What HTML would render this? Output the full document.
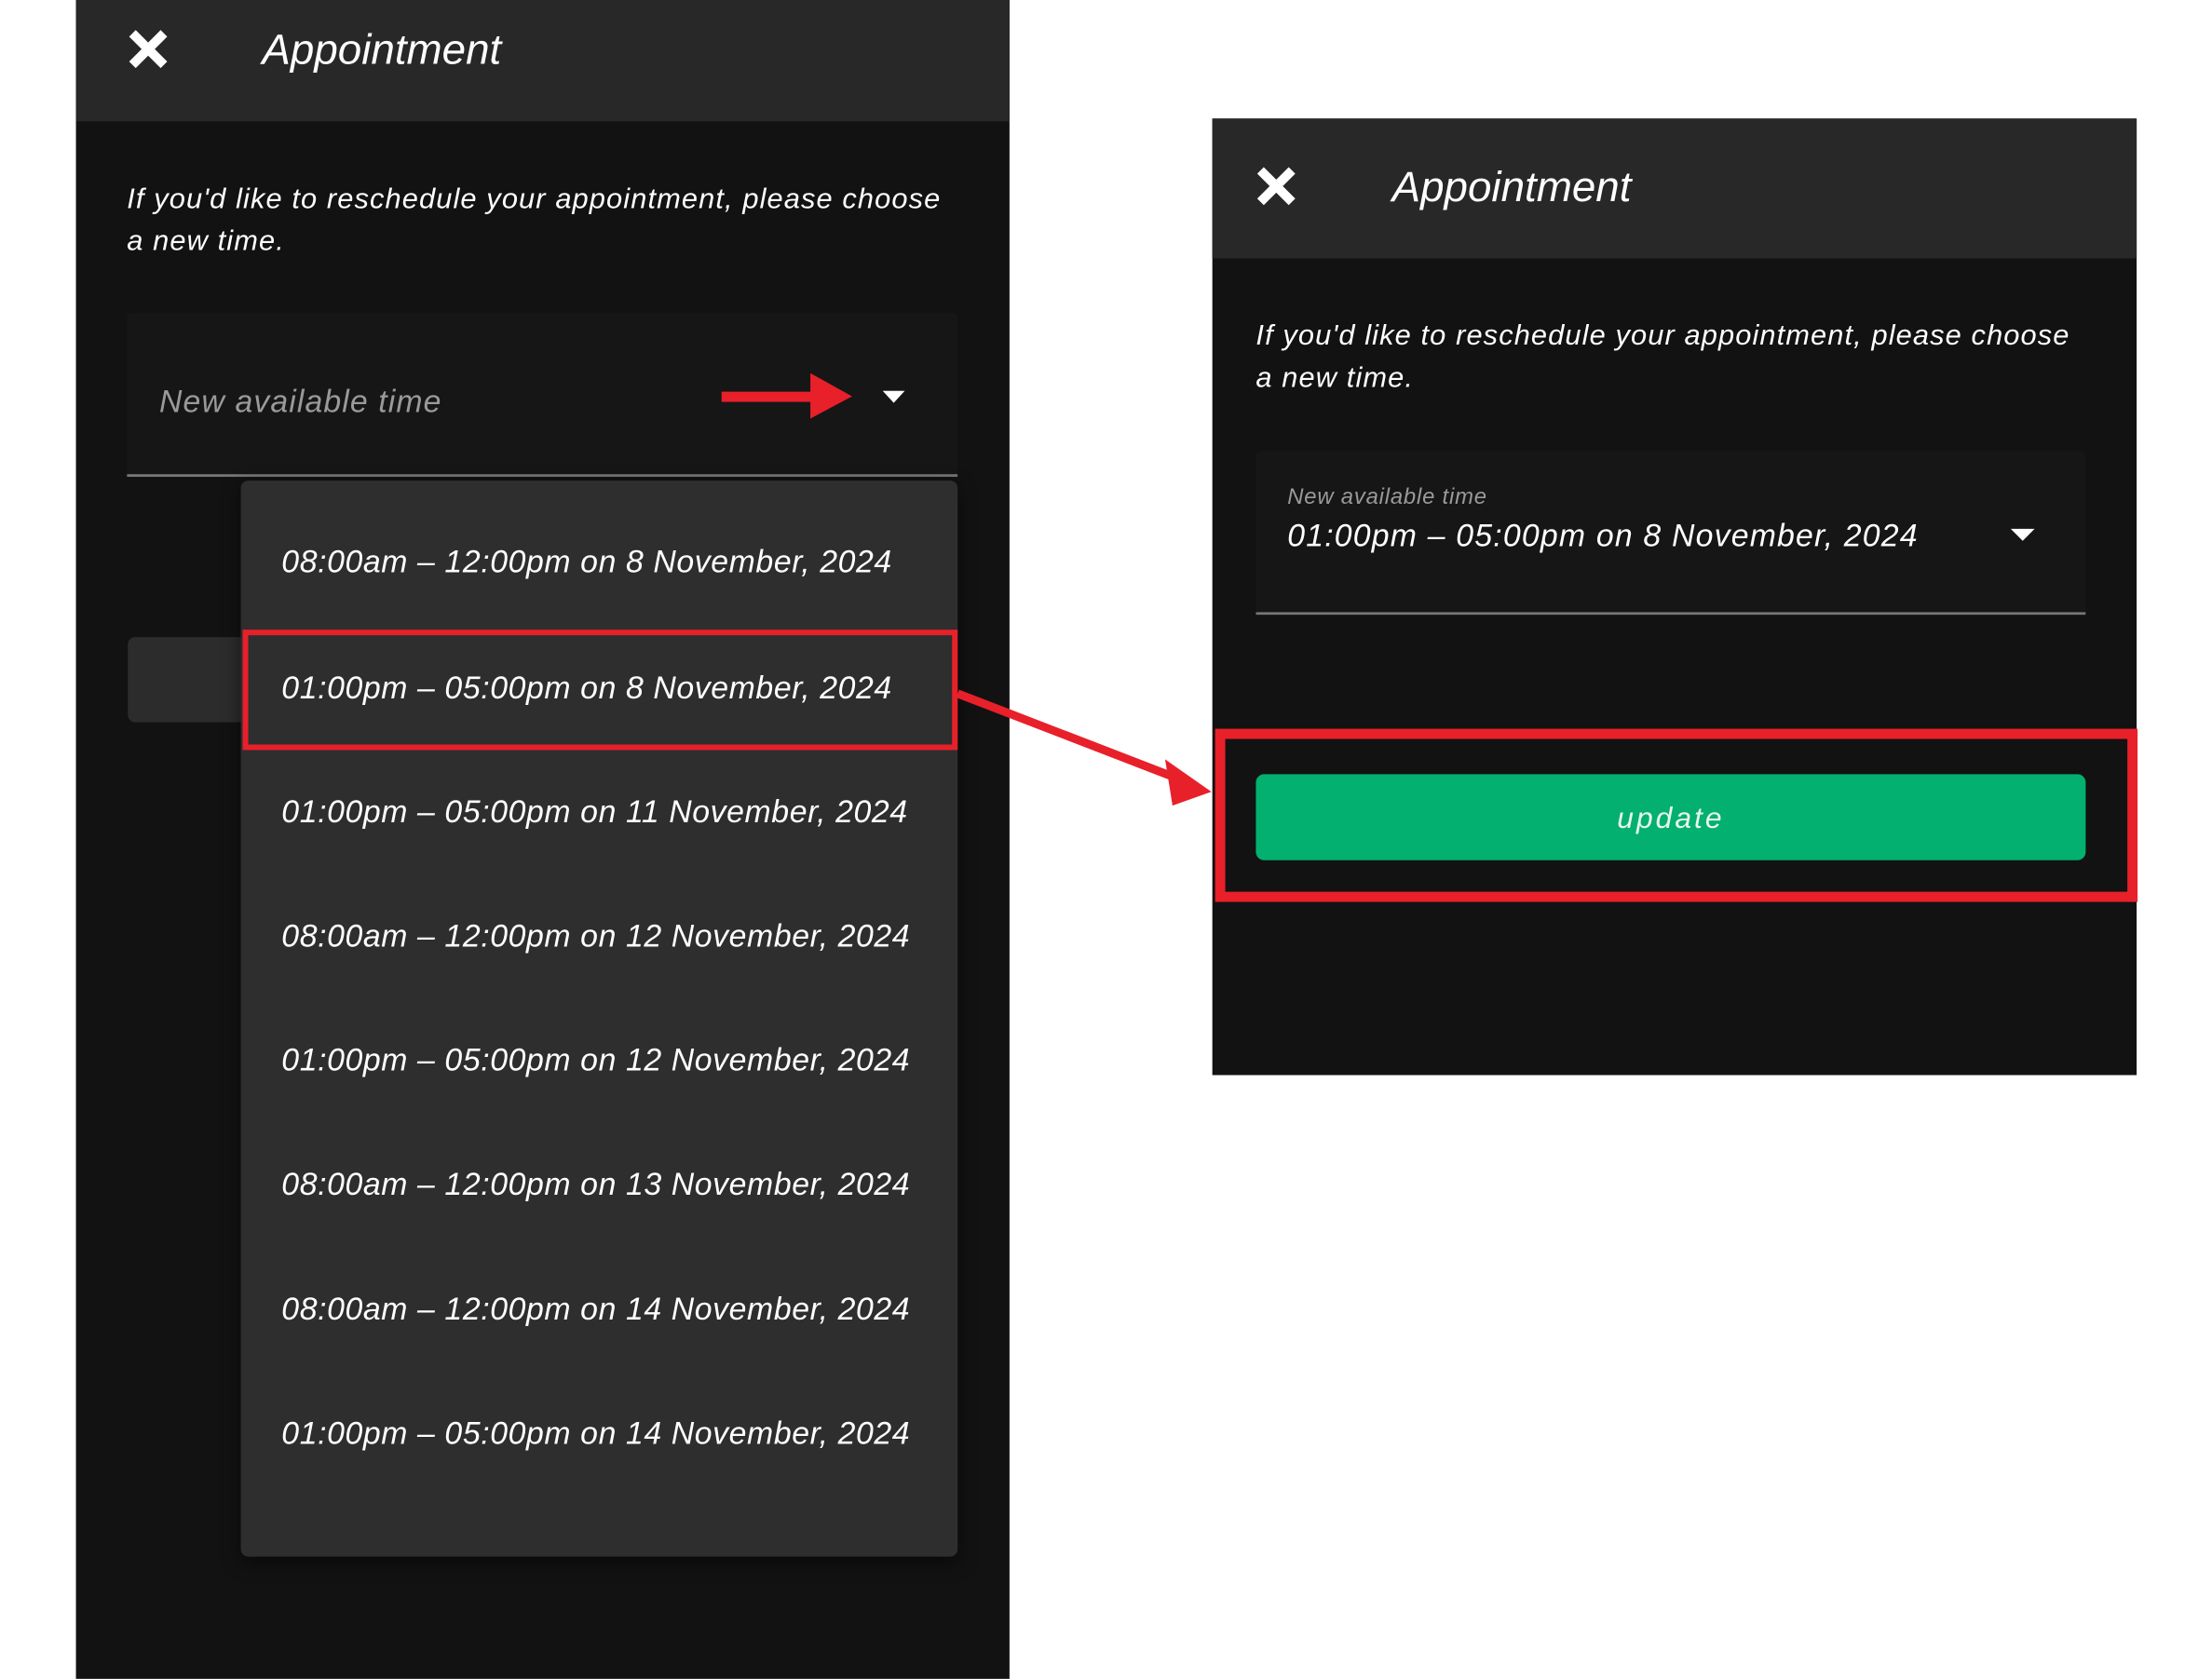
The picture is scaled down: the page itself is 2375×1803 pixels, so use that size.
<!DOCTYPE html>
<html><head><meta charset="utf-8"><style>
*{margin:0;padding:0;box-sizing:border-box}
body{width:2375px;height:1803px;background:#fff;position:relative;overflow:hidden;font-family:"Liberation Sans",sans-serif;font-style:italic;color:#fff}
#w{position:absolute;left:0;top:0;width:2400px;height:1813px;transform:scale(0.9944);transform-origin:0 0}
.a{position:absolute}
.t{white-space:nowrap;line-height:1}
.p{letter-spacing:1.1px}
.m{letter-spacing:0.6px}
</style></head><body><div id="w">
<div class="a" style="left:82px;top:0;width:1008px;height:1813px;background:#121212"></div>
<div class="a" style="left:82px;top:0;width:1008px;height:131px;background:#282828"></div>
<svg class="a" style="left:137px;top:30px" width="46" height="46" viewBox="0 0 46 46"><path d="M6 6L40 40M40 6L6 40" stroke="#fff" stroke-width="10"/></svg>
<div class="a t" style="left:283px;top:30px;font-size:46px">Appointment</div>
<div class="a t p" style="left:137px;top:199px;font-size:31px">If you'd like to reschedule your appointment, please choose</div>
<div class="a t p" style="left:137px;top:244px;font-size:31px">a new time.</div>
<div class="a" style="left:137px;top:338px;width:897px;height:177px;background:#161616;border-bottom:3px solid #777;border-radius:6px 6px 0 0"></div>
<div class="a t p" style="left:172px;top:417px;font-size:34px;color:#9a9a9a">New available time</div>
<svg class="a" style="left:779px;top:400px" width="145" height="55"><rect x="0" y="23" width="100" height="11" fill="#e8202a"/><path d="M96 3L141 28L96 52Z" fill="#e8202a"/></svg>
<svg class="a" style="left:953px;top:422px" width="24" height="14"><path d="M0 0H24L12 13Z" fill="#fff"/></svg>
<div class="a" style="left:138px;top:688px;width:200px;height:92px;background:#2c2c2c;border-radius:8px"></div>
<div class="a" style="left:260px;top:519px;width:774px;height:1162px;background:#2e2e2e;border-radius:8px;box-shadow:0 6px 20px rgba(0,0,0,.5)"></div>
<div class="a t m" style="left:304px;top:590px;font-size:34px">08:00am – 12:00pm on 8 November, 2024</div>
<div class="a t m" style="left:304px;top:726px;font-size:34px">01:00pm – 05:00pm on 8 November, 2024</div>
<div class="a t m" style="left:304px;top:860px;font-size:34px">01:00pm – 05:00pm on 11 November, 2024</div>
<div class="a t m" style="left:304px;top:994px;font-size:34px">08:00am – 12:00pm on 12 November, 2024</div>
<div class="a t m" style="left:304px;top:1128px;font-size:34px">01:00pm – 05:00pm on 12 November, 2024</div>
<div class="a t m" style="left:304px;top:1262px;font-size:34px">08:00am – 12:00pm on 13 November, 2024</div>
<div class="a t m" style="left:304px;top:1397px;font-size:34px">08:00am – 12:00pm on 14 November, 2024</div>
<div class="a t m" style="left:304px;top:1531px;font-size:34px">01:00pm – 05:00pm on 14 November, 2024</div>
<div class="a" style="left:262px;top:680px;width:772px;height:130px;border:6px solid #e8202a"></div>
<svg class="a" style="left:0;top:0" width="2400" height="1813"><path d="M1034 749L1275 842" stroke="#e8202a" stroke-width="9"/><path d="M1308 855L1258 820L1266 870Z" fill="#e8202a"/></svg>
<div class="a" style="left:1309px;top:128px;width:998px;height:1033px;background:#121212"></div>
<div class="a" style="left:1309px;top:128px;width:998px;height:151px;background:#282828"></div>
<svg class="a" style="left:1355px;top:178px" width="46" height="46" viewBox="0 0 46 46"><path d="M6 6L40 40M40 6L6 40" stroke="#fff" stroke-width="10"/></svg>
<div class="a t" style="left:1503px;top:178px;font-size:46px">Appointment</div>
<div class="a t p" style="left:1356px;top:346px;font-size:31px">If you'd like to reschedule your appointment, please choose</div>
<div class="a t p" style="left:1356px;top:392px;font-size:31px">a new time.</div>
<div class="a" style="left:1356px;top:487px;width:896px;height:177px;background:#161616;border-bottom:3px solid #777;border-radius:6px 6px 0 0"></div>
<div class="a t" style="left:1390px;top:525px;font-size:24px;color:#9a9a9a;letter-spacing:0.8px">New available time</div>
<div class="a t" style="left:1390px;top:562px;font-size:34px;letter-spacing:1.2px">01:00pm – 05:00pm on 8 November, 2024</div>
<svg class="a" style="left:2171px;top:571px" width="26" height="14"><path d="M0 0H26L13 13Z" fill="#fff"/></svg>
<div class="a" style="left:1312px;top:787px;width:996px;height:187px;border:11px solid #e8202a"></div>
<div class="a" style="left:1356px;top:836px;width:896px;height:93px;background:#03b070;border-radius:9px"></div>
<div class="a t" style="left:1356px;top:867px;width:896px;text-align:center;font-size:32px;letter-spacing:3px;color:#e8f5ee">update</div>
</div></body></html>
